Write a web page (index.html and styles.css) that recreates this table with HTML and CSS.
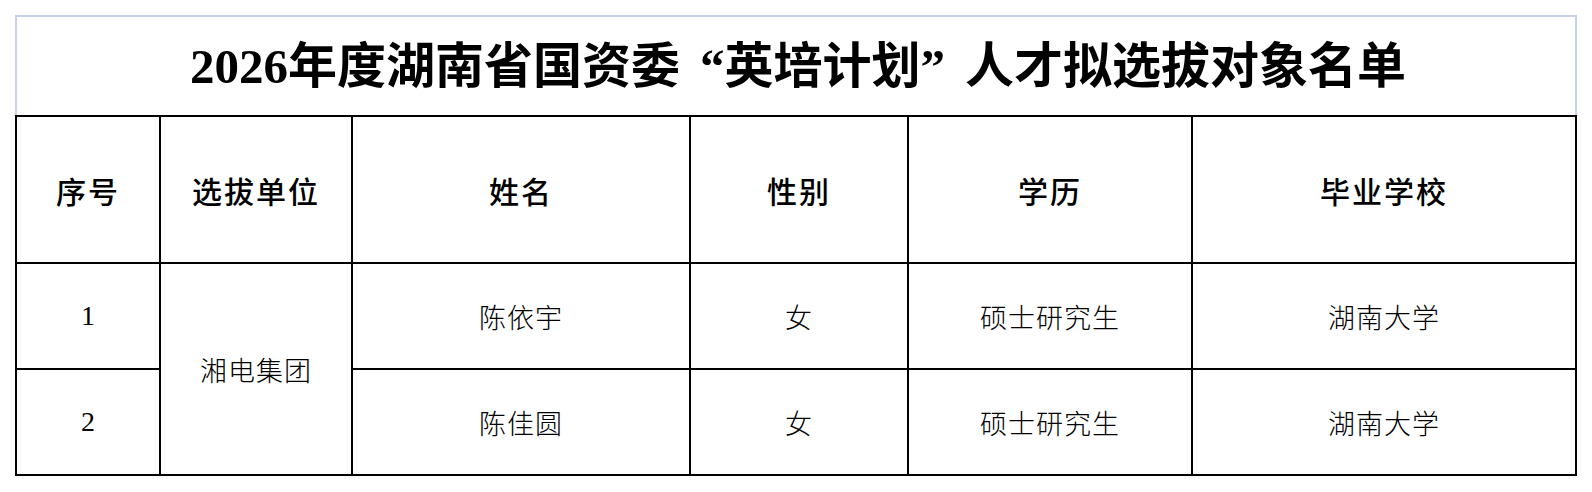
FILE: index.html
```html
<!DOCTYPE html>
<html lang="zh-CN">
<head>
<meta charset="utf-8">
<title>名单</title>
<link rel="stylesheet" href="styles.css">
</head>
<body>
<div class="sheet">
  <div class="title-box">
    <h1 class="title">2026年度湖南省国资委<span class="ql">“</span>英培计划<span class="qr">”</span>人才拟选拔对象名单</h1>
  </div>
  <div class="grid">
    <div class="cell head">序号</div>
    <div class="cell head">选拔单位</div>
    <div class="cell head">姓名</div>
    <div class="cell head">性别</div>
    <div class="cell head">学历</div>
    <div class="cell head">毕业学校</div>

    <div class="cell num">1</div>
    <div class="cell body span2">湘电集团</div>
    <div class="cell body">陈依宇</div>
    <div class="cell body">女</div>
    <div class="cell body">硕士研究生</div>
    <div class="cell body">湖南大学</div>

    <div class="cell num">2</div>
    <div class="cell body">陈佳圆</div>
    <div class="cell body">女</div>
    <div class="cell body">硕士研究生</div>
    <div class="cell body">湖南大学</div>
  </div>
</div>
</body>
</html>
```

FILE: styles.css
```css
html, body {
  margin: 0;
  padding: 0;
  background: #ffffff;
}

.sheet {
  padding: 15px 0 0 15px;
  width: 1562px;
}

.title-box {
  border: 2px solid #c8d0e1;
  border-bottom: none;
  height: 98px;
  display: flex;
  align-items: center;
  justify-content: center;
}

.title {
  margin: 0;
  font-family: "Liberation Serif", "Noto Sans CJK SC", serif;
  font-weight: bold;
  font-size: 49px;
  line-height: 1;
  color: #000;
  padding-left: 4px;
}

.ql {
  margin-left: 20px;
}

.qr {
  margin-right: 20px;
}

.grid {
  display: grid;
  grid-template-columns: 142px 190px 336px 216px 282px 382px;
  grid-template-rows: 145px 104px 104px;
  gap: 2px;
  padding: 2px;
  background: #000;
}

.cell {
  background: #fff;
  display: flex;
  align-items: center;
  justify-content: center;
  color: #000;
}

.head {
  font-family: "Noto Sans CJK SC", sans-serif;
  font-size: 30px;
  font-weight: 500;
  letter-spacing: 2px;
}

.body {
  font-family: "Noto Sans CJK SC", sans-serif;
  font-size: 27px;
  font-weight: 300;
  letter-spacing: 1px;
}

.num {
  font-family: "Liberation Serif", serif;
  font-size: 28px;
}

.span2 {
  grid-row: span 2;
}
```
